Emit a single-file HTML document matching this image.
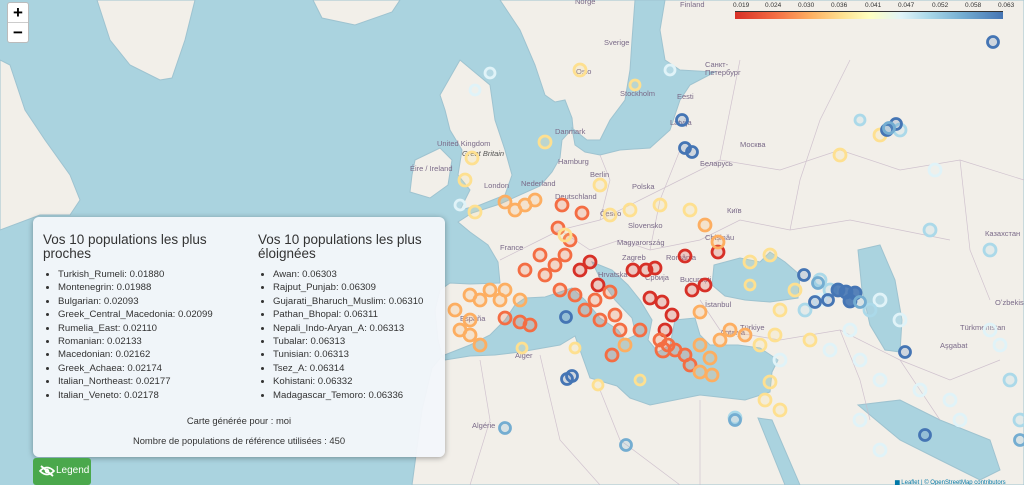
<!DOCTYPE html>
<html><head><meta charset="utf-8"><style>
*{margin:0;padding:0;box-sizing:border-box}
body{width:1024px;height:485px;overflow:hidden;background:#aad3df;font-family:"Liberation Sans","DejaVu Sans",sans-serif;position:relative}
svg{position:absolute;left:0;top:0}
.zc{position:absolute;left:7px;top:2px;width:22px;height:41px;background:#fff;border:1px solid #bbb;border-radius:3px}
.zc div{height:20px;text-align:center;font:bold 17px/19px "Liberation Sans",sans-serif;color:#000}
.zc div:first-child{border-bottom:1px solid #ccc}
.panel{position:absolute;left:33px;top:217px;width:412px;height:240px;background:rgba(242,246,250,0.96);border-radius:6px;box-shadow:0 1px 6px rgba(0,0,0,.35);color:#333}
.col{position:absolute;top:16px;width:190px}
.col h3{font-weight:normal;font-size:13.5px;line-height:14px;color:#333}
.col ul{margin-top:7px;padding-left:15px;font-size:9.6px;line-height:13.4px;list-style:disc}
.foot{position:absolute;left:0;width:412px;text-align:center;font-size:9.4px;color:#333}
.btn{position:absolute;left:33px;top:458px;width:58px;height:27px;background:#4aa84c;border-radius:3px;color:#fff;font-size:10px;line-height:26px;padding-left:23px}
.cb{position:absolute;left:735px;top:2px;width:270px;font-size:6.5px;color:#333}
.cb .bar{position:absolute;top:9px;left:0;width:268px;height:8px;background:linear-gradient(90deg,#d73027,#f46d43 15%,#fdae61 28%,#fee090 40%,#ffffbf 50%,#e0f3f8 62%,#abd9e9 72%,#74add1 85%,#4575b4);border-top:1px solid #333}
.cb span{position:absolute;top:0}
</style></head><body>
<svg width="1024" height="485" viewBox="0 0 1024 485">
<g fill="#f2efe9" stroke="#9ec3d0" stroke-width="1">
<path d="M97 0 L195 0 L185 40 L172 78 L160 80 L130 65 L110 40 Z"/>
<path d="M313 0 L400 0 L392 12 L355 25 L322 18 Z"/>
<path d="M0 60 L10 65 L25 110 L45 140 L70 175 L80 200 L70 215 L40 215 L0 230 Z"/>
<path d="M440 95 L460 60 L490 85 L495 120 L505 150 L512 175 L505 195 L480 205 L460 210 L470 190 L458 175 L462 150 L450 130 L445 110 Z"/>
<path d="M415 160 L440 148 L452 160 L448 185 L430 198 L410 192 L412 175 Z"/>
<!-- mainland -->
<path d="M500 0 L520 30 L535 65 L545 95 L555 102 L565 100 L572 118 L573 128 L562 140 L560 158 L552 172 L540 186 L522 194 L500 204 L472 213 L458 222 L470 232 L488 245 L498 262 L500 283 L470 284 L450 283 L440 290 L435 310 L438 340 L442 356 L432 368 L422 410 L412 485 L1024 485 L1024 0 Z"/>
</g>
<!-- Seas -->
<g fill="#aad3df" stroke="#9ec3d0">
<path d="M442 356 L470 345 L490 335 L505 320 L515 305 L525 298 L545 297 L560 292 L572 288 L585 300 L600 318 L618 330 L625 340 L636 335 L632 318 L615 300 L600 278 L592 262 L612 270 L628 285 L640 300 L652 320 L648 340 L658 352 L670 345 L675 320 L695 318 L700 335 L710 345 L738 345 L760 348 L778 360 L772 372 L770 392 L745 400 L700 395 L650 405 L630 398 L617 386 L590 378 L575 336 L560 345 L520 352 L495 355 L470 356 L445 360 Z"/>
<path d="M714 265 L740 258 L760 262 L770 252 L785 262 L800 275 L798 298 L770 302 L745 300 L725 296 L712 285 Z"/>
<path d="M858 250 L880 245 L895 280 L902 320 L900 352 L885 350 L870 325 L862 290 Z"/>
<path d="M858 405 L900 400 L940 420 L990 440 L1000 470 L980 480 L940 460 L900 440 Z"/>
<path d="M758 418 L772 420 L800 485 L785 485 Z"/>
<path d="M572 128 L587 140 L600 140 L610 120 L625 100 L630 70 L632 40 L635 0 L665 0 L660 30 L665 60 L680 70 L715 72 L690 85 L680 100 L670 130 L650 148 L620 150 L600 155 L585 152 L575 145 Z"/>
</g>
<!-- borders -->
<g fill="none" stroke="#c8b8c8" stroke-width="0.7" opacity="0.8">
<path d="M500 260 L540 240 L560 230 L600 220 L640 200 L680 180 L720 160 L780 170 L840 150 L900 170 L960 160 L1024 180"/>
<path d="M560 230 L590 250 L620 240 L650 250 L700 240 L740 220 L790 230 L850 220 L900 230 L950 240"/>
<path d="M600 220 L610 180 L600 155 M650 250 L660 200 L680 150 M720 160 L730 110 L740 60 M790 230 L800 180 L820 120 L850 60"/>
<path d="M700 300 L720 330 L780 340 L840 330 L900 360 L950 380 L1000 360 M840 330 L860 380 L870 420 M900 360 L940 420"/>
<path d="M480 360 L490 420 L470 485 M540 355 L560 440 L600 485 M600 390 L620 440 L680 485 M700 400 L700 485 M960 160 L970 250 L990 300"/>
</g>
<g font-family="Liberation Sans,sans-serif" font-size="7.5" fill="#7a6a88">
<text x="576" y="74">Oslo</text><text x="620" y="96">Stockholm</text><text x="604" y="45">Sverige</text>
<text x="437" y="146">United Kingdom</text><text x="462" y="156" font-style="italic" fill="#555">Great Britain</text><text x="410" y="171">Éire / Ireland</text>
<text x="555" y="134">Danmark</text><text x="558" y="164">Hamburg</text><text x="590" y="177">Berlin</text><text x="484" y="188">London</text>
<text x="521" y="186">Nederland</text><text x="555" y="199">Deutschland</text><text x="632" y="189">Polska</text><text x="600" y="216">Česko</text>
<text x="628" y="228">Slovensko</text><text x="500" y="250">France</text><text x="617" y="245">Magyarország</text><text x="622" y="260">Zagreb</text>
<text x="666" y="260">România</text><text x="680" y="282">București</text><text x="598" y="277">Hrvatska</text><text x="645" y="280">Србија</text>
<text x="705" y="240">Chișinău</text><text x="727" y="213">Київ</text><text x="740" y="147">Москва</text><text x="677" y="99">Eesti</text>
<text x="670" y="125">Latvija</text><text x="700" y="166">Беларусь</text><text x="705" y="67">Санкт-</text><text x="705" y="75">Петербург</text>
<text x="705" y="307">İstanbul</text><text x="720" y="335">Antalya</text><text x="740" y="330">Türkiye</text><text x="960" y="330">Türkmenistan</text>
<text x="995" y="305">Oʻzbekiston</text><text x="985" y="236">Казахстан</text><text x="460" y="321">España</text><text x="515" y="358">Alger</text>
<text x="472" y="428">Algérie</text><text x="680" y="7">Finland</text><text x="575" y="4">Norge</text><text x="940" y="348">Aşgabat</text>
</g>
<g fill-opacity="0.2" stroke-width="2.8">
<g stroke="#d73027" fill="#d73027">
<circle cx="590" cy="262" r="6"/><circle cx="580" cy="270" r="6"/><circle cx="598" cy="285" r="6"/><circle cx="633" cy="270" r="6"/><circle cx="655" cy="268" r="6"/><circle cx="650" cy="298" r="6"/><circle cx="662" cy="302" r="6"/><circle cx="672" cy="315" r="6"/><circle cx="665" cy="330" r="6"/><circle cx="692" cy="290" r="6"/><circle cx="705" cy="285" r="6"/><circle cx="685" cy="256" r="6"/><circle cx="718" cy="252" r="6"/><circle cx="646" cy="270" r="6"/>
</g>
<g stroke="#f46d43" fill="#f46d43">
<circle cx="565" cy="255" r="6"/><circle cx="555" cy="265" r="6"/><circle cx="545" cy="275" r="6"/><circle cx="560" cy="290" r="6"/><circle cx="575" cy="295" r="6"/><circle cx="585" cy="310" r="6"/><circle cx="600" cy="320" r="6"/><circle cx="615" cy="315" r="6"/><circle cx="620" cy="330" r="6"/><circle cx="660" cy="340" r="6"/><circle cx="668" cy="345" r="6"/><circle cx="675" cy="350" r="6"/><circle cx="663" cy="350" r="7"/><circle cx="685" cy="355" r="6"/><circle cx="690" cy="365" r="6"/><circle cx="612" cy="355" r="6"/><circle cx="520" cy="322" r="6"/><circle cx="530" cy="325" r="6"/><circle cx="505" cy="318" r="6"/><circle cx="570" cy="240" r="6"/><circle cx="540" cy="255" r="6"/><circle cx="525" cy="270" r="6"/><circle cx="582" cy="213" r="6"/><circle cx="558" cy="228" r="6"/><circle cx="562" cy="205" r="6"/><circle cx="640" cy="330" r="6"/><circle cx="595" cy="300" r="6"/><circle cx="610" cy="292" r="6"/>
</g>
<g stroke="#fdae61" fill="#fdae61">
<circle cx="470" cy="295" r="6"/><circle cx="480" cy="300" r="6"/><circle cx="490" cy="290" r="6"/><circle cx="470" cy="320" r="6"/><circle cx="460" cy="330" r="6"/><circle cx="470" cy="335" r="6"/><circle cx="480" cy="345" r="6"/><circle cx="500" cy="300" r="6"/><circle cx="505" cy="290" r="6"/><circle cx="520" cy="300" r="6"/><circle cx="455" cy="310" r="6"/><circle cx="515" cy="210" r="6"/><circle cx="505" cy="202" r="6"/><circle cx="525" cy="205" r="6"/><circle cx="535" cy="200" r="6"/><circle cx="700" cy="345" r="6"/><circle cx="710" cy="358" r="6"/><circle cx="720" cy="340" r="6"/><circle cx="700" cy="372" r="6"/><circle cx="712" cy="375" r="6"/><circle cx="730" cy="330" r="6"/><circle cx="745" cy="335" r="6"/><circle cx="705" cy="225" r="6"/><circle cx="718" cy="242" r="6"/><circle cx="625" cy="345" r="6"/><circle cx="700" cy="312" r="6"/>
</g>
<g stroke="#fee090" fill="#fee090">
<circle cx="565" cy="235" r="6"/><circle cx="600" cy="185" r="6"/><circle cx="610" cy="215" r="6"/><circle cx="630" cy="210" r="6"/><circle cx="660" cy="205" r="6"/><circle cx="750" cy="262" r="6"/><circle cx="770" cy="255" r="6"/><circle cx="775" cy="335" r="6"/><circle cx="760" cy="345" r="6"/><circle cx="795" cy="290" r="6"/><circle cx="780" cy="310" r="6"/><circle cx="475" cy="212" r="6"/><circle cx="465" cy="180" r="6"/><circle cx="472" cy="158" r="6"/><circle cx="545" cy="142" r="6"/><circle cx="580" cy="70" r="6"/><circle cx="635" cy="85" r="5"/><circle cx="690" cy="210" r="6"/><circle cx="770" cy="382" r="6"/><circle cx="765" cy="400" r="6"/><circle cx="780" cy="410" r="6"/><circle cx="810" cy="340" r="6"/><circle cx="640" cy="380" r="5"/><circle cx="522" cy="348" r="5"/><circle cx="575" cy="348" r="5"/><circle cx="598" cy="385" r="5"/><circle cx="840" cy="155" r="6"/><circle cx="880" cy="135" r="6"/><circle cx="750" cy="285" r="5"/>
</g>
<g stroke="#e0f3f8" fill="#e0f3f8">
<circle cx="820" cy="300" r="6"/><circle cx="830" cy="350" r="6"/><circle cx="850" cy="330" r="6"/><circle cx="860" cy="360" r="6"/><circle cx="880" cy="380" r="6"/><circle cx="920" cy="390" r="6"/><circle cx="960" cy="420" r="6"/><circle cx="950" cy="400" r="6"/><circle cx="990" cy="330" r="6"/><circle cx="1000" cy="345" r="6"/><circle cx="860" cy="420" r="6"/><circle cx="880" cy="450" r="6"/><circle cx="490" cy="73" r="5"/><circle cx="475" cy="90" r="5"/><circle cx="460" cy="205" r="5"/><circle cx="670" cy="70" r="5"/><circle cx="935" cy="170" r="6"/><circle cx="900" cy="320" r="6"/><circle cx="880" cy="300" r="6"/><circle cx="780" cy="360" r="6"/>
</g>
<g stroke="#abd9e9" fill="#abd9e9">
<circle cx="805" cy="310" r="6"/><circle cx="870" cy="310" r="6"/><circle cx="1010" cy="380" r="6"/><circle cx="990" cy="250" r="6"/><circle cx="930" cy="230" r="6"/><circle cx="900" cy="130" r="6"/><circle cx="860" cy="120" r="5"/><circle cx="735" cy="418" r="6"/><circle cx="1020" cy="420" r="6"/><circle cx="830" cy="290" r="6"/><circle cx="820" cy="280" r="6"/>
</g>
<g stroke="#4575b4" fill="#4575b4">
<circle cx="993" cy="42" r="5.5"/><circle cx="896" cy="124" r="5.5"/><circle cx="887" cy="130" r="5.5"/><circle cx="682" cy="120" r="5.5"/><circle cx="685" cy="148" r="5.5"/><circle cx="692" cy="152" r="5.5"/><circle cx="804" cy="275" r="5.5"/><circle cx="838" cy="290" r="6" fill-opacity="0.9"/><circle cx="846" cy="292" r="6" fill-opacity="0.9"/><circle cx="855" cy="293" r="6" fill-opacity="0.9"/><circle cx="850" cy="301" r="6" fill-opacity="0.9"/><circle cx="815" cy="302" r="5.5"/><circle cx="566" cy="317" r="5.5"/><circle cx="567" cy="379" r="5.5"/><circle cx="572" cy="376" r="5.5"/><circle cx="905" cy="352" r="5.5"/><circle cx="925" cy="435" r="5.5"/><circle cx="828" cy="300" r="5.5"/>
</g>
<g stroke="#74add1" fill="#74add1">
<circle cx="626" cy="445" r="5.5"/><circle cx="505" cy="428" r="5.5"/><circle cx="735" cy="420" r="5.5"/><circle cx="889" cy="128" r="5.5"/><circle cx="818" cy="283" r="5.5"/><circle cx="860" cy="302" r="5.5"/><circle cx="1020" cy="440" r="5.5"/>
</g>
</g>
<text x="895" y="484" font-size="6" fill="#0078a8" font-family="Liberation Sans,sans-serif">▆ Leaflet | © OpenStreetMap contributors</text>
</svg>

<div class="zc"><div>+</div><div>−</div></div>

<div class="cb"><div class="bar"></div>
<span style="left:-2px">0.019</span><span style="left:30px">0.024</span><span style="left:63px">0.030</span><span style="left:96px">0.036</span><span style="left:130px">0.041</span><span style="left:163px">0.047</span><span style="left:197px">0.052</span><span style="left:230px">0.058</span><span style="left:263px">0.063</span></div>

<div class="panel">
<div class="col" style="left:10px"><h3>Vos 10 populations les plus proches</h3>
<ul><li>Turkish_Rumeli: 0.01880</li><li>Montenegrin: 0.01988</li><li>Bulgarian: 0.02093</li><li>Greek_Central_Macedonia: 0.02099</li><li>Rumelia_East: 0.02110</li><li>Romanian: 0.02133</li><li>Macedonian: 0.02162</li><li>Greek_Achaea: 0.02174</li><li>Italian_Northeast: 0.02177</li><li>Italian_Veneto: 0.02178</li></ul></div>
<div class="col" style="left:225px"><h3>Vos 10 populations les plus éloignées</h3>
<ul><li>Awan: 0.06303</li><li>Rajput_Punjab: 0.06309</li><li>Gujarati_Bharuch_Muslim: 0.06310</li><li>Pathan_Bhopal: 0.06311</li><li>Nepali_Indo-Aryan_A: 0.06313</li><li>Tubalar: 0.06313</li><li>Tunisian: 0.06313</li><li>Tsez_A: 0.06314</li><li>Kohistani: 0.06332</li><li>Madagascar_Temoro: 0.06336</li></ul></div>
<div class="foot" style="top:198px">Carte générée pour : moi</div>
<div class="foot" style="top:218px">Nombre de populations de référence utilisées : 450</div>
</div>

<div class="btn"><svg width="16" height="12" viewBox="0 0 16 12" style="left:6px;top:7px"><path d="M1 6 Q8 -1 15 6 Q8 13 1 6 Z" fill="none" stroke="#fff" stroke-width="1.6"/><circle cx="8" cy="6" r="2.2" fill="#fff"/><path d="M2 1 L14 11" stroke="#fff" stroke-width="1.8"/></svg>Legend</div>
</body></html>
